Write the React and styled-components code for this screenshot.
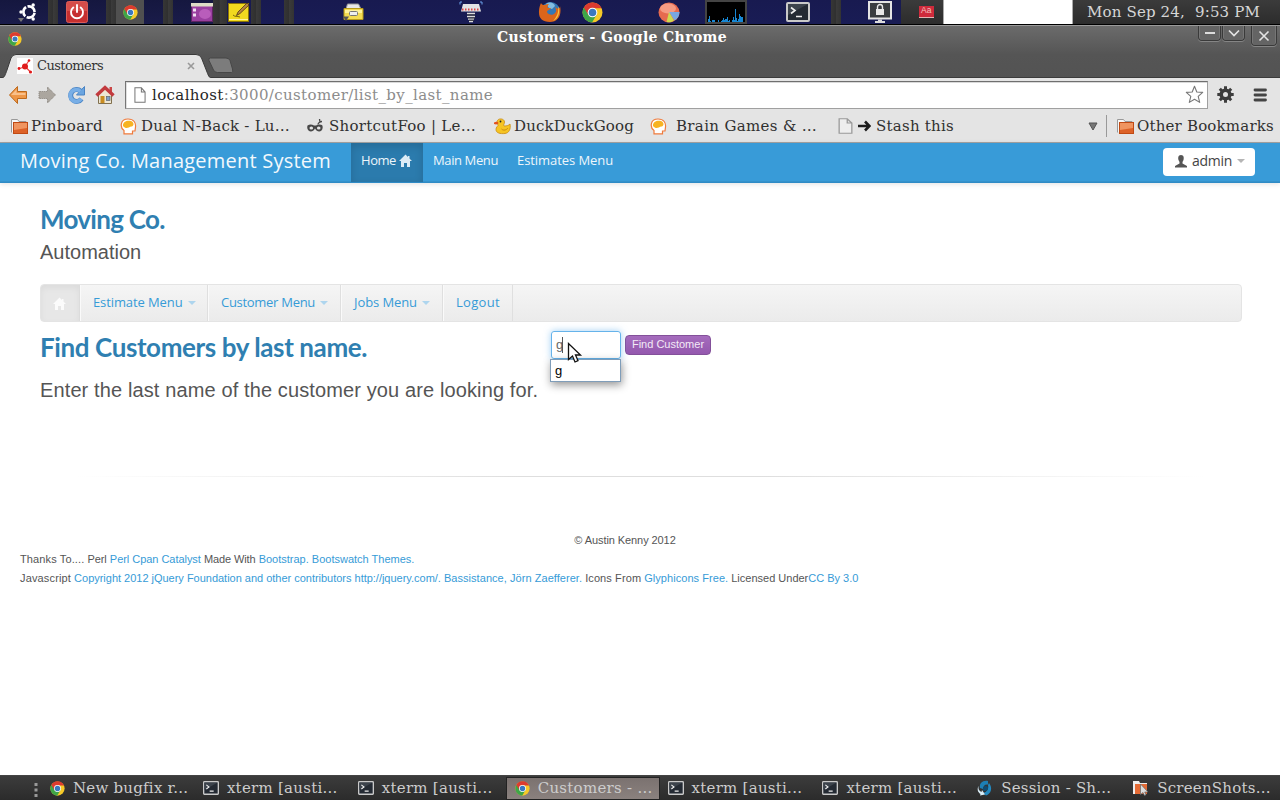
import React from "react";
import styled, { createGlobalStyle, css } from "styled-components";

const slab = '"DejaVu Serif", serif';
const humanist = '"Open Sans", "Noto Sans", sans-serif';
const sans = '"Liberation Sans", Arial, sans-serif';

const Global = createGlobalStyle`
  * { box-sizing: border-box; }
  body { margin: 0; background: #fff; overflow: hidden; }
  svg { display: block; flex: none; }
  a { color: #369bd7; text-decoration: none; }
`;

const Screen = styled.div`
  width: 1280px;
  height: 800px;
  display: flex;
  flex-direction: column;
  overflow: hidden;
  background: #fff;
`;

const Label = styled.span`
  white-space: pre;
  letter-spacing: ${(p) => p.$ls || 0}px;
`;

/* ---------- desktop panel ---------- */

const Panel = styled.header`
  height: 25px;
  display: flex;
  border-bottom: 1px solid #000;
  background: linear-gradient(#3b3b3b, #2c2c2c);
`;

const tones = {
  blue: css`background: linear-gradient(#181a50, #191c55);`,
  night: css`background: linear-gradient(#15173f, #1a1c4a);`,
  grey: css`background: linear-gradient(90deg, #363636, #303030 45%, #3b3b3b 50%, #333);`,
  lit: css`background: #505050;`,
  white: css`background: #fff; border: 1px solid #aaa; border-width: 0 1px;`,
};

const Segment = styled.div`
  display: flex;
  align-items: center;
  width: ${(p) => p.$w}px;
  ${(p) => tones[p.$tone]}
`;

const Slot = styled.div`
  margin-left: ${(p) => p.$ml}px;
`;

const Clock = styled.div`
  flex: 1;
  display: flex;
  gap: 10px;
  align-items: center;
  padding: 0 0 1px 14px;
  color: #d6d6d6;
  font: 15px/22px ${slab};
`;

/* ---------- browser window ---------- */

const WindowHead = styled.div`
  height: 53px;
  border-top: 1px solid #9a9a9a;
  background: linear-gradient(#6b6b6b, #555 55%, #535353);
  display: flex;
  flex-direction: column;
`;

const TitleRow = styled.div`
  height: 27px;
  display: flex;
  align-items: flex-start;
  padding-left: 8px;
`;

const WindowTitle = styled.div`
  flex: 1;
  padding-left: 475px;
  color: #fff;
  font: bold 14px/23px ${slab};
`;

const WindowButton = styled.div`
  width: ${(p) => p.$w || 23}px;
  height: ${(p) => p.$h || 15}px;
  margin-right: ${(p) => p.$mr}px;
  display: flex;
  align-items: center;
  justify-content: center;
  border: 1px solid #3a3a3a;
  border-top: 0;
  border-radius: 0 0 4px 4px;
  box-shadow: 0 1px 0 #858585, inset 1px 0 0 #767676, inset -1px 0 0 #767676;
  background: #646464;
`;

const TabStrip = styled.div`
  height: 25px;
  display: flex;
  border-bottom: 1px solid #3b3b3b;
`;

const Tab = styled.div`
  position: relative;
  width: 212px;
  height: 25px;
  display: flex;
  align-items: center;
  padding: 0 17px 0 17px;
  color: #333;
  font: 13px/20px ${slab};
`;

const TabShape = styled.svg`
  position: absolute;
  left: 0;
  top: 0;
`;

const TabContent = styled.div`
  position: relative;
  flex: 1;
  display: flex;
  align-items: center;
  gap: 4px;
`;

const TabClose = styled.div`
  margin-left: auto;
`;

const NewTab = styled.div`
  margin: 4px 0 0 -5px;
`;

const Chrome = styled.div`
  height: 65px;
  background: #e4e4e4;
  border-bottom: 1px solid #a3a3a3;
`;

const AddressRow = styled.div`
  height: 33px;
  display: flex;
  align-items: center;
  padding: 0 10px 0 8px;
`;

const NavIcons = styled.div`
  width: 117px;
  display: flex;
  gap: 9px;
`;

const UrlBox = styled.div`
  width: 1083px;
  height: 28px;
  display: flex;
  align-items: center;
  padding: 0 3px 0 8px;
  border: 1px solid #a0a0a0;
  border-top-color: #6f6f6f;
  border-left-color: #777;
  box-shadow: inset 0 1px 0 #d9d9d9, inset 1px 0 0 #e0e0e0;
  background: #fff;
  color: #8c8c8c;
  font: 15px/24px ${slab};
  svg + ${Label} { flex: 1; margin-left: 6px; }
  b { font-weight: normal; color: #262626; }
`;

const Tools = styled.div`
  flex: 1;
  display: flex;
  align-items: center;
  justify-content: space-between;
  padding-left: 9px;
  padding-right: 3px;
`;

const BookmarkRow = styled.div`
  height: 31px;
  display: flex;
  align-items: center;
  padding: 0 0 1px 11px;
  color: #303030;
  font: 15px/24px ${slab};
`;

const Bookmark = styled.div`
  width: ${(p) => p.$w}px;
  display: flex;
  align-items: center;
  gap: ${(p) => p.$gap || 4}px;
`;

const Divider = styled.div`
  width: 1px;
  height: 22px;
  margin: 0 10px 0 8px;
  background: #999;
`;

/* ---------- site ---------- */

const Navbar = styled.nav`
  height: 40px;
  display: flex;
  align-items: stretch;
  padding: 0 25px 0 20px;
  background: #389bd8;
  border-bottom: 1px solid #2f8bc6;
  box-shadow: inset 0 -1px 0 #3591ca, 0 1px 5px rgba(0, 0, 0, 0.12);
  color: #fff;
  font: 13px/35px ${humanist};
`;

const Brand = styled.div`
  width: 331px;
  font-size: 20px;
  line-height: 35px;
  color: #f2f8fc;
`;

const NavItem = styled.div`
  display: flex;
  align-items: flex-start;
  padding: 0 10px;
  width: ${(p) => p.$w}px;
  color: #eef6fb;
  ${(p) => p.$active && css`
    background: #2b7bad;
    box-shadow: inset 0 3px 8px rgba(0, 0, 0, 0.14);
  `}
`;

const NavIcon = styled.div`
  margin: 11px 0 0 3px;
`;

const UserButton = styled.div`
  margin: 5px 0 0 auto;
  width: 92px;
  height: 28px;
  display: flex;
  align-items: center;
  padding: 0 0 2px 12px;
  border-radius: 4px;
  background: #fff;
  color: #444;
  font: 14px/24px ${humanist};
`;

const Caret = styled.i`
  margin-left: 5px;
  border: 4px solid transparent;
  border-top-color: ${(p) => p.$color};
  border-bottom: 0;
`;

const Site = styled.main`
  flex: 1;
  display: flex;
  flex-direction: column;
`;

const Heading = styled.h1`
  margin: 0;
  height: 36px;
  color: #2f7fb1;
  font: bold 26px/34px Lato, ${humanist};
`;

const Masthead = styled.div`
  padding: 19px 40px 0;
`;

const Lead = styled.p`
  margin: 0;
  color: #555;
  font: 20px/28px ${sans};
`;

const SubNav = styled.div`
  margin: 18px 38px 0 40px;
  height: 38px;
  display: flex;
  border: 1px solid #e4e4e4;
  border-radius: 4px;
  background: linear-gradient(#f5f5f5, #ebebeb);
  overflow: hidden;
  font: 13px/34px ${humanist};
`;

const SubHome = styled.div`
  width: 39px;
  display: flex;
  justify-content: center;
  padding: 12px 2px 0 0;
  background: #e7e7e7;
  border-right: 1px solid #dcdcdc;
  box-shadow: inset 0 3px 6px rgba(0, 0, 0, 0.05);
`;

const SubItem = styled.a`
  display: flex;
  align-items: center;
  width: ${(p) => p.$w}px;
  padding: 0 0 2px 12px;
  border-left: 1px solid #fafafa;
  border-right: 1px solid #dfdfdf;
  ${Caret} { margin-top: 2px; }
`;

const Search = styled.section`
  display: flex;
  padding-left: 40px;
  height: 154px;
`;

const SearchText = styled.div`
  width: 511px;
  padding-top: 8px;
  ${Lead} { margin-top: 10px; }
`;

const SearchForm = styled.div`
  display: flex;
  align-items: flex-start;
  padding-top: 9px;
  gap: 4px;
`;

const Field = styled.div`
  position: relative;
  width: 70px;
  height: 28px;
  display: flex;
  align-items: center;
  padding: 0 4px;
  border: 1px solid #66b3ea;
  border-radius: 3px;
  box-shadow: 0 0 7px rgba(82, 168, 236, 0.55);
  color: #666;
  font: 13px/20px ${sans};
`;

const TextCaret = styled.i`
  width: 1px;
  height: 16px;
  margin-left: -1px;
  background: #555;
`;

const Suggestion = styled.div`
  position: absolute;
  left: -2px;
  top: 27px;
  width: 71px;
  height: 23px;
  padding-left: 4px;
  border: 1px solid #7f9db9;
  background: #fff;
  box-shadow: 1px 3px 8px rgba(0, 0, 0, 0.42);
  color: #000;
  font: 13px/21px ${sans};
`;

const Pointer = styled.svg`
  position: absolute;
  left: 15px;
  top: 10px;
`;

const FindButton = styled.div`
  margin-top: 4px;
  width: 86px;
  height: 20px;
  text-align: center;
  border: 1px solid #83509a;
  border-radius: 4px;
  background: linear-gradient(#a56cbd, #9458ae);
  color: #f3eaf6;
  font: 11px/17px ${sans};
`;

const Rule = styled.hr`
  margin: 0 40px;
  height: 1px;
  border: 0;
  background: linear-gradient(90deg, rgba(0, 0, 0, 0) 3%, #dedede 40%, #dedede 60%, rgba(0, 0, 0, 0) 97%);
`;

const Footer = styled.footer`
  padding: 54px 30px 0 20px;
  color: #555;
  font: 11px/19px ${sans};
`;

const Copyright = styled.div`
  padding-right: 20px;
  text-align: center;
`;

/* ---------- window list ---------- */

const Taskbar = styled.footer`
  height: 25px;
  display: flex;
  padding-left: 33px;
  border-top: 1px solid #444;
  background: linear-gradient(#3c3c3c, #2b2b2b);
  color: #cdcdcd;
  font: 15px/23px ${slab};
`;

const Grip = styled.div`
  width: 8px;
  padding: 7px 0 0 1px;
`;

const Task = styled.div`
  width: 155px;
  display: flex;
  align-items: center;
  gap: 8px;
  padding: 0 0 0 ${(p) => (p.$wide ? 9 : 7)}px;
  ${(p) => p.$active && css`
    width: 154px;
    margin: 1px 1px 0 0;
    padding-left: 8px;
    background: linear-gradient(#7b7270, #8a817e);
    border: 1px solid #222;
  `}
`;

/* ---------- drawings ---------- */

const ChromeIcon = ({ s = 16 }) => (
  <svg width={s} height={s} viewBox="0 0 20 20">
    <circle cx="10" cy="10" r="9.5" fill="#f5c928" />
    <path d="M10 10 1.8 5.2A9.5 9.5 0 0 0 9.6 19.5L14 12Z" fill="#3fa648" />
    <path d="M1.8 5.2A9.5 9.5 0 0 1 18.7 6H10L6 12.4Z" fill="#dc3b2f" />
    <circle cx="10" cy="10" r="4.6" fill="#fff" />
    <circle cx="10" cy="10" r="3.6" fill="#3a78c0" />
  </svg>
);

const TerminalIcon = ({ w = 16, h = 14 }) => (
  <svg width={w} height={h} viewBox="0 0 24 20" preserveAspectRatio="none">
    <rect x="1" y="1" width="22" height="18" rx="1" fill="#242a33" stroke="#c9c9c9" strokeWidth="2" />
    <path d="M2 2h20L2 13Z" fill="#3c434c" />
    <path d="M5 5.5 9 8.5 5 11.5M10 14.5h6" fill="none" stroke="#eee" strokeWidth="1.6" />
  </svg>
);

const HouseIcon = ({ color }) => (
  <svg width="13" height="13" viewBox="0 0 13 13">
    <path d="M6.5 0.5 0 7h2v6h3V9h3v4h3V7h2L10.5 4.5V2H9v1Z" fill={color} />
  </svg>
);

const FolderIcon = () => (
  <svg width="17" height="15" viewBox="0 0 17 15">
    <path d="M.5 13.5v-13h6l1.5 2h7v2" fill="#f7f7f7" stroke="#999" />
    <rect x="2.5" y="3.5" width="14" height="11" fill="#dd6228" stroke="#c04a14" />
    <path d="M3 4h13v5L3 11Z" fill="#f09560" />
  </svg>
);

const HeadIcon = () => (
  <svg width="17" height="17" viewBox="0 0 17 17">
    <path d="M4 15.8V12.5C-.2 9.500 0 1 8 1c6 0 8 4 7.500 8L15 13h-2.500v2.800Z" fill="#fff" stroke="#ef7b3c" strokeWidth="1.200" />
    <path d="M3 8C2.500 3 8 2 11 3s3.500 5 .5 5.500S6.500 12 3 8Z" fill="#f7b322" />
  </svg>
);

const PageIcon = ({ w = 13, h = 16, fill = "#fff", line = "#777" }) => (
  <svg width={w} height={h} viewBox="0 0 13 16" preserveAspectRatio="none">
    <path d="M1 .8h7L12 5v10.2H1ZM8 .8V5h4" fill={fill} stroke={line} strokeWidth="1.1" />
  </svg>
);

const UbuntuIcon = () => (
  <svg width="20" height="20" viewBox="0 0 20 20">
    <circle cx="11" cy="10" r="5.6" fill="none" stroke="#fff" strokeWidth="2.6" strokeDasharray="10.2 1.5" strokeDashoffset="-.8" />
    <circle cx="3" cy="10" r="1.7" fill="#fff" />
    <circle cx="15.2" cy="3" r="1.7" fill="#fff" />
    <circle cx="15.2" cy="17" r="1.7" fill="#fff" />
    <path d="M0 16h6l-3 4Z" fill="#777" />
  </svg>
);

const PowerIcon = () => (
  <svg width="22" height="22" viewBox="0 0 22 22">
    <rect x=".5" y=".5" width="21" height="21" rx="2" fill="#c62f30" stroke="#d95c58" />
    <path d="M1 1h20v9H1Z" fill="#e0625c" opacity=".6" />
    <path d="M7.3 6.5a6 6 0 1 0 7.4 0M11 4v7" fill="none" stroke="#fff" strokeWidth="1.900" strokeLinecap="round" />
  </svg>
);

const DesktopIcon = () => (
  <svg width="22" height="19" viewBox="0 0 22 19">
    <rect x=".5" y=".5" width="21" height="18" fill="#9a3fa0" stroke="#5d2461" />
    <ellipse cx="14" cy="11" rx="6" ry="5" fill="#c66bc6" opacity=".7" />
    <path d="M0 0h22v3.5H0Z" fill="#dedcc6" />
    <path d="M2 5.500h3v3H2Zm0 5h3v3H2Z" fill="#f1dff1" />
  </svg>
);

const NoteIcon = () => (
  <svg width="22" height="21" viewBox="0 0 22 21">
    <rect x=".5" y="1.5" width="20" height="18" fill="#f1d91f" stroke="#8a7408" />
    <path d="M1 17.500h19" stroke="#fff3a0" />
    <path d="M5 13c2 2 4 1 7 2" stroke="#77650a" fill="none" />
    <path d="m8.500 13.500 1.500-3.500L19 1l2 2-9 8.500Z" fill="#b8853f" stroke="#4d3516" strokeWidth=".8" />
  </svg>
);

const DrawerIcon = () => (
  <svg width="22" height="20" viewBox="0 0 22 20">
    <path d="M3 7 4.500 2h11L18 7Z" fill="#e8e8e8" stroke="#999" />
    <path d="M1 6.500h19v11H1Z" fill="#f4dc53" stroke="#b89b19" />
    <rect x="2" y="8" width="17" height="3" fill="#fff39b" />
    <rect x="6.500" y="9.500" width="8" height="4" rx="1" fill="#eee" stroke="#777" />
    <path d="M0 14.500h6l-3 4.500Z" fill="#555" />
  </svg>
);

const SpringIcon = () => (
  <svg width="24" height="22" viewBox="0 0 24 22">
    <path d="M4 3h16l2 7.500H2Z" fill="#e3e3e3" />
    <path d="M3 8.500h18" stroke="#d44" strokeWidth="1.800" strokeDasharray="1.500 1.500" />
    <path d="M1 3.500V1h2M23 3.500V1h-2" stroke="#6da4ef" fill="none" />
    <path d="M8 12.500h8M8 15.500h8M9 18h6M10 20.500h4" stroke="#ddd" strokeWidth="1.500" />
    <path d="M8 14h8M9 17h7M10 19.300h5" stroke="#444" />
  </svg>
);

const FirefoxIcon = () => (
  <svg width="23" height="22" viewBox="0 0 23 22">
    <circle cx="12.5" cy="10.5" r="9.5" fill="#3478b7" />
    <path d="M8 3c4-3 8-1 9 2l-3 3-3-1Z" fill="#82bde2" />
    <path d="M3 2c1 2 2 2 4 2 1-1 3-1 4-1-1 1-2 3-1 4h3c-1 2-4 2-4 4 1 3 6 4 8 1 2-2 1-4 0-6 4 3 5 1 5-1 2 9-2 16-10 16S.5 17 1 10c0-3 1-6 2-8Z" fill="#dc651b" />
    <path d="M20 5c3 6 0 13-5 15 4-4 6-9 5-15Z" fill="#fac33a" />
  </svg>
);

const PieIcon = () => (
  <svg width="22" height="21" viewBox="0 0 22 21">
    <ellipse cx="11" cy="10.5" rx="10.5" ry="10" fill="#e66a4f" />
    <ellipse cx="10" cy="6.500" rx="8" ry="5" fill="#f59b83" />
    <path d="M11 10h10.500c0 4-2 7-5 8.500Z" fill="#78a7e2" />
    <path d="m11 10 5 8.500c-3 2-5 2-7.500 1.500Z" fill="#cfda4d" />
  </svg>
);

const bars = [3, 6, 1, 0, 2, 2, 2, 0, 0, 0, 2, 0, 0, 1, 2, 4, 2, 3, 3, 5, 1, 2, 0, 0, 2, 5, 2, 13, 4, 1, 3, 8, 6, 5, 5];
const LoadGraph = () => (
  <svg width="42" height="24" viewBox="0 0 42 24" shapeRendering="crispEdges">
    <rect x="1" y="1" width="40" height="22" fill="#000" stroke="#444" strokeWidth="2" />
    {bars.map((h, i) => (
      <rect key={i} x={3 + i} y={22 - h} width="1" height={h} fill="#1787d4" />
    ))}
  </svg>
);

const LockScreenIcon = () => (
  <svg width="24" height="22" viewBox="0 0 24 22">
    <rect x="1" y="1" width="22" height="16.500" fill="#3a3d40" stroke="#e4e4e4" strokeWidth="2" />
    <path d="M10 18.500h4v1.500h3v2H7v-2h3Z" fill="#dcdcdc" />
    <rect x="8" y="8" width="8" height="6" fill="#e8e8e8" />
    <path d="M9.500 8V6a2.500 2.500 0 0 1 5 0v2" fill="none" stroke="#e8e8e8" strokeWidth="1.400" />
  </svg>
);

const DictionaryIcon = () => (
  <svg width="15" height="12" viewBox="0 0 15 12">
    <path d="M0 0h15v11H0Z" fill="#cf2b3c" />
    <path d="M0 11.5h15" stroke="#e5b6b6" />
    <text x="2" y="7" fontSize="8.500" fill="#f5c3c0" fontFamily="Liberation Sans">Aa</text>
  </svg>
);

const ArrowIcon = ({ flip }) => (
  <svg width="20" height="20" viewBox="0 0 20 20">
    {flip ? (
      <path d="M18.500 10 10.500 2v4.500H2v7h8.500V18Z" fill="#aba69f" stroke="#817c75" strokeDasharray="1 1" />
    ) : (
      <>
        <path d="M1.500 10 9.500 1.500V6.500H18.500v7H9.500v5Z" fill="#ee9748" stroke="#bd691c" />
        <path d="M3 10 8.500 4.500V8H17.500v2Z" fill="#f9c08a" />
      </>
    )}
  </svg>
);

const ReloadIcon = () => (
  <svg width="20" height="20" viewBox="0 0 20 20">
    <path d="M15.500 14a6 6 0 1 1-.8-8" fill="none" stroke="#4a84c4" strokeWidth="5" />
    <path d="M18.500 1.500v8.500H10.500Z" fill="#6ba5e0" stroke="#4a84c4" />
    <path d="M15.300 13.800a6 6 0 1 1-.8-7.500" fill="none" stroke="#78aee6" strokeWidth="3.800" />
  </svg>
);

const HomeIcon = () => (
  <svg width="20" height="20" viewBox="0 0 20 20">
    <path d="M3.500 9 10 4l6.500 5v9.500h-13Z" fill="#ede6d4" stroke="#81704e" />
    <rect x="5.500" y="11" width="4" height="7" fill="#c98c21" />
    <rect x="11.500" y="11.500" width="3.500" height="4" fill="#7e9fc9" stroke="#60656b" strokeWidth=".7" />
    <path d="M14.500 2h2.500v6h-2.500Z" fill="#ca4747" />
    <path d="m1.500 10.500 8.500-8 8.500 8" fill="none" stroke="#c23a3e" strokeWidth="3.400" />
  </svg>
);

const StarIcon = () => (
  <svg width="19" height="19" viewBox="0 0 19 19">
    <path d="m9.500 1.200 2.300 5.800 5.900.4-4.500 4 1.500 6-5.200-3.200-5.200 3.200 1.500-6-4.500-4L7.200 7Z" fill="#fff" stroke="#777" strokeWidth="1.100" strokeLinejoin="round" />
  </svg>
);

const GearIcon = () => (
  <svg width="17" height="17" viewBox="0 0 17 17">
    <g stroke="#3d3d3d" strokeWidth="3">
      <path d="M8.500 .3v16.400M.3 8.500h16.400" />
      <path d="m2.800 2.800 11.400 11.400M14.200 2.800 2.800 14.200" />
    </g>
    <circle cx="8.500" cy="8.500" r="4.300" fill="#e4e4e4" stroke="#3d3d3d" strokeWidth="3.600" />
  </svg>
);

const MenuIcon = () => (
  <svg width="14" height="14" viewBox="0 0 14 14">
    <path d="M2 2h10.500M2 7h10.500M2 12h10.500" stroke="#444" strokeWidth="2.800" strokeLinecap="round" />
  </svg>
);

const DuckIcon = () => (
  <svg width="17" height="17" viewBox="0 0 17 17">
    <path d="M3 3.500c1-4 7.500-3 7.500.5 0 2-1.500 3-.5 4 3 0 4.500-.5 6-2 1 5-1 9-5 9.500-5 .5-9-.5-9-4 0-2.500 1.500-3 2-4Z" fill="#f6c423" stroke="#c98b10" strokeWidth=".8" />
    <path d="M0 4.500c2-1 4-1 4.500.5C4 6.500 2 6.800 0 6Z" fill="#e3531e" />
    <circle cx="6.500" cy="3.500" r=".9" fill="#222" />
    <path d="M7.500 11c2 2 5 1 6.500-1" stroke="#c98b10" fill="none" />
  </svg>
);

const MaskIcon = () => (
  <svg width="16" height="14" viewBox="0 0 16 14">
    <path d="M.5 6.500C3 5 5 5.500 7 6.500h2c2-1 4-1.500 6-.5 1 1 1 4-.5 5.500-2 2-5 1-6.500-2-1.500 3-4.500 4-6.500 2C0 10 0 8 .5 6.500Z" fill="#484848" />
    <path d="M11 5.500C11 4 13 2.500 15 2.500M13 3.500 12.500 0" stroke="#484848" strokeWidth="1.300" fill="none" />
    <ellipse cx="4.300" cy="9" rx="1.800" ry="1.500" fill="#e4e4e4" />
    <ellipse cx="11.700" cy="9" rx="1.800" ry="1.500" fill="#e4e4e4" />
  </svg>
);

const CatalystIcon = () => (
  <svg width="16" height="16" viewBox="0 0 16 16">
    <rect width="16" height="16" fill="#fff" />
    <path d="m8 8.500 4-6M8 8.500 1.500 11M8 8.500 13.500 14" stroke="#e44" strokeWidth="1.200" />
    <circle cx="8" cy="8.500" r="3" fill="#e01b1b" />
    <circle cx="12" cy="2.500" r="1.300" fill="#e01b1b" />
    <circle cx="2" cy="10.500" r="1.400" fill="#e01b1b" />
    <circle cx="13.500" cy="14" r="1.600" fill="#e01b1b" />
  </svg>
);

const SwirlIcon = () => (
  <svg width="16" height="16" viewBox="0 0 16 16">
    <path d="M11 1C6 0 2 3 3 8l3 1C6 6 8 4 11 4.500Z" fill="#1d7fb5" />
    <path d="M12 3c4 5 2 11-3 12.500L6 13c4-1 6-4 5-8Z" fill="#2389c0" />
    <path d="M1.500 6c-.5 3 .5 5 3 6l.5-2 3 4.500-5 1 .5-1.500C.5 12 0 9 1.500 6Z" fill="#d9ecf5" />
    <path d="M6 8c1-3 5-2.500 5 0s-3 4-5 2.500Z" fill="#0d4b73" />
  </svg>
);

const FilesIcon = () => (
  <svg width="17" height="16" viewBox="0 0 17 16">
    <path d="M1 14V1h6l1 2h7v11Z" fill="#eee" />
    <path d="M3 4h12v10H3Z" fill="#e56b35" />
    <path d="M8.500 4v10.500l2.500-2 1.500 3 1.500-.7-1.300-2.800H16Z" fill="#ddd" stroke="#666" strokeWidth=".7" />
  </svg>
);

const UserIcon = () => (
  <svg width="12" height="13" viewBox="0 0 12 13">
    <path d="M6 0C3 0 3 3 3.500 5L4.500 7v1.500L0 11v1.500h12V11L7.500 8.500V7l1-2C9 3 9 0 6 0Z" fill="#555" />
  </svg>
);

const tasks = [
  { icon: <ChromeIcon s={15} />, text: "New bugfix r...", ls: 0.23, wide: true },
  { icon: <TerminalIcon />, text: "xterm [austi...", ls: 0.26 },
  { icon: <TerminalIcon />, text: "xterm [austi...", ls: 0.26 },
  { icon: <ChromeIcon s={15} />, text: "Customers - ...", ls: 0.28, wide: true, active: true },
  { icon: <TerminalIcon />, text: "xterm [austi...", ls: 0.26 },
  { icon: <TerminalIcon />, text: "xterm [austi...", ls: 0.26 },
  { icon: <SwirlIcon />, text: "Session - Sh...", ls: 0.2 },
  { icon: <FilesIcon />, text: "ScreenShots...", ls: 0.24 },
];

const bookmarks = [
  { w: 109, icon: <FolderIcon />, text: "Pinboard", ls: 0.39, gap: 3 },
  { w: 187, icon: <HeadIcon />, text: "Dual N-Back - Lu…", ls: 0.23, gap: 4 },
  { w: 187, icon: <MaskIcon />, text: "ShortcutFoo | Le…", ls: 0.27, gap: 6 },
  { w: 156, icon: <DuckIcon />, text: "DuckDuckGoog", ls: 0.17, gap: 3 },
  { w: 188, icon: <HeadIcon />, text: "Brain Games & …", ls: 0.34, gap: 9 },
];

const menus = [
  { w: 128, text: "Estimate Menu", ls: -0.1 },
  { w: 133, text: "Customer Menu", ls: -0.29 },
  { w: 102, text: "Jobs Menu", ls: -0.09 },
];

export default function App() {
  return (
    <Screen>
      <Global />
      <Panel>
        <Segment $w={48} $tone="night"><Slot $ml={18}><UbuntuIcon /></Slot></Segment>
        <Segment $w={10} $tone="grey" />
        <Segment $w={48} $tone="night"><Slot $ml={8}><PowerIcon /></Slot></Segment>
        <Segment $w={10} $tone="grey" />
        <Segment $w={28} $tone="lit"><Slot $ml={7}><ChromeIcon s={15} /></Slot></Segment>
        <Segment $w={19} $tone="night" />
        <Segment $w={10} $tone="grey" />
        <Segment $w={15} $tone="night" />
        <Segment $w={25} $tone="night"><Slot $ml={3}><DesktopIcon /></Slot></Segment>
        <Segment $w={14} $tone="grey" />
        <Segment $w={24} $tone="blue"><Slot $ml={1}><NoteIcon /></Slot></Segment>
        <Segment $w={10} $tone="grey" />
        <Segment $w={23} $tone="blue" />
        <Segment $w={10} $tone="grey" />
        <Segment $w={537} $tone="blue">
          <Slot $ml={49}><DrawerIcon /></Slot>
          <Slot $ml={94}><SpringIcon /></Slot>
          <Slot $ml={55}><FirefoxIcon /></Slot>
          <Slot $ml={21}><ChromeIcon s={21} /></Slot>
          <Slot $ml={55}><PieIcon /></Slot>
          <Slot $ml={25}><LoadGraph /></Slot>
          <Slot $ml={39}><TerminalIcon w={24} h={20} /></Slot>
        </Segment>
        <Segment $w={10} $tone="grey" />
        <Segment $w={60} $tone="blue"><Slot $ml={27}><LockScreenIcon /></Slot></Segment>
        <Segment $w={42} $tone="panel"><Slot $ml={18}><DictionaryIcon /></Slot></Segment>
        <Segment $w={130} $tone="white" />
        <Clock>
          <Label $ls={0.16}>Mon Sep 24,</Label>
          <Label $ls={0.16}>9:53 PM</Label>
        </Clock>
      </Panel>

      <WindowHead>
        <TitleRow>
          <Slot $ml={0}>
            <svg width="14" height="20"><g transform="translate(0 6)"><ChromeIcon s={14} /></g></svg>
          </Slot>
          <WindowTitle><Label $ls={0.37}>Customers - Google Chrome</Label></WindowTitle>
          <WindowButton $mr={1}>
            <svg width="11" height="12"><path d="M1 6h10" stroke="#dcdcdc" strokeWidth="2" /></svg>
          </WindowButton>
          <WindowButton $mr={6}>
            <svg width="12" height="12"><path d="m1 3.500 5 5 5-5" stroke="#e4e4e4" strokeWidth="1.700" fill="none" /></svg>
          </WindowButton>
          <WindowButton $w={26} $h={20} $mr={3}>
            <svg width="12" height="12"><path d="m1.500 1.500 9 9m0-9-9 9" stroke="#e4e4e4" strokeWidth="1.600" /></svg>
          </WindowButton>
        </TitleRow>
        <TabStrip>
          <Tab>
            <TabShape width="214" height="26" viewBox="0 0 214 26">
              <path d="M0 25.500C5 25 5 22 7 17L11 5Q12.500 1.500 16 1.500H196Q200 1.500 201.500 5L207 19C209 24 209 25 214 25.500Z" fill="#e4e4e4" stroke="#3a3a3a" />
              <path d="M0 25.500H214" stroke="#e4e4e4" strokeWidth="1.200" />
            </TabShape>
            <TabContent>
              <CatalystIcon />
              <Label $ls={-0.55}>Customers</Label>
              <TabClose>
                <svg width="8" height="8"><path d="m1 1 6 6m0-6-6 6" stroke="#999" strokeWidth="1.600" /></svg>
              </TabClose>
            </TabContent>
          </Tab>
          <NewTab>
            <svg width="28" height="17">
              <path d="M3.500 1H19Q22 1 23 3.500L25.500 12q1 3.500-1 3.500H10.500Q7.500 15.500 6.500 13L2 3.500Q1 1 3.500 1Z" fill="#7c7c7c" stroke="#474747" />
            </svg>
          </NewTab>
        </TabStrip>
      </WindowHead>

      <Chrome>
        <AddressRow>
          <NavIcons>
            <ArrowIcon />
            <ArrowIcon flip />
            <ReloadIcon />
            <HomeIcon />
          </NavIcons>
          <UrlBox>
            <PageIcon w={12} />
            <Label $ls={0.37}><b>localhost</b>:3000/customer/list_by_last_name</Label>
            <StarIcon />
          </UrlBox>
          <Tools>
            <GearIcon />
            <MenuIcon />
          </Tools>
        </AddressRow>
        <BookmarkRow>
          {bookmarks.map((b) => (
            <Bookmark key={b.text} $w={b.w} $gap={b.gap}>
              {b.icon}
              <Label $ls={b.ls}>{b.text}</Label>
            </Bookmark>
          ))}
          <Bookmark $w={250} $gap={5}>
            <PageIcon w={15} fill="#eee" line="#999" />
            <svg width="13" height="12"><path d="M0 6h10M7 1.500 11.500 6 7 10.500" fill="none" stroke="#1c1c1c" strokeWidth="2.600" /></svg>
            <Label $ls={0.24}>Stash this</Label>
          </Bookmark>
          <svg width="10" height="9"><path d="M1 1h8L5 8Z" fill="#777" stroke="#555" /></svg>
          <Divider />
          <Bookmark $w={163} $gap={3}>
            <FolderIcon />
            <Label $ls={0.19}>Other Bookmarks</Label>
          </Bookmark>
        </BookmarkRow>
      </Chrome>

      <Navbar>
        <Brand><Label $ls={0.22}>Moving Co. Management System</Label></Brand>
        <NavItem $w={72} $active>
          <Label $ls={-0.44}>Home</Label>
          <NavIcon><HouseIcon color="#dcebf5" /></NavIcon>
        </NavItem>
        <NavItem $w={84}><Label $ls={-0.39}>Main Menu</Label></NavItem>
        <NavItem $w={116}><Label $ls={-0.07}>Estimates Menu</Label></NavItem>
        <UserButton>
          <UserIcon />
          <Slot $ml={5}><Label $ls={-0.29}>admin</Label></Slot>
          <Caret $color="#b5b5b5" />
        </UserButton>
      </Navbar>

      <Site>
        <Masthead>
          <Heading><Label $ls={-0.7}>Moving Co.</Label></Heading>
          <Lead>Automation</Lead>
        </Masthead>
        <SubNav>
          <SubHome><HouseIcon color="#fbfbfb" /></SubHome>
          {menus.map((m) => (
            <SubItem key={m.text} $w={m.w} href="#">
              <Label $ls={m.ls}>{m.text}</Label>
              <Caret $color="#aed5ee" />
            </SubItem>
          ))}
          <SubItem $w={70} href="#"><Label $ls={0.32}>Logout</Label></SubItem>
        </SubNav>

        <Search>
          <SearchText>
            <Heading><Label $ls={-0.4}>Find Customers by last name.</Label></Heading>
            <Lead><Label $ls={0.12}>Enter the last name of the customer you are looking for.</Label></Lead>
          </SearchText>
          <SearchForm>
            <Field>
              g<TextCaret />
              <Suggestion>g</Suggestion>
              <Pointer width="16" height="22" viewBox="0 0 16 22">
                <path d="M1.500 1.500v16l4-3.500 2.500 6 3-1.300L8.500 13h5Z" fill="#fff" stroke="#111" strokeWidth="1.300" />
              </Pointer>
            </Field>
            <FindButton>Find Customer</FindButton>
          </SearchForm>
        </Search>

        <Rule />

        <Footer>
          <Copyright><Label $ls={-0.08}>© Austin Kenny 2012</Label></Copyright>
          <div>
            <Label $ls={0.12}>Thanks To....</Label> <Label $ls={-0.05}>Perl</Label>{" "}
            <a href="#"><Label $ls={-0.04}>Perl Cpan Catalyst</Label></a>{" "}
            <Label $ls={-0.1}>Made With</Label> <a href="#">Bootstrap.</a> <a href="#">Bootswatch Themes.</a>
          </div>
          <div>
            <Label $ls={0.15}>Javascript</Label>{" "}
            <a href="#"><Label $ls={-0.015}>Copyright 2012 jQuery Foundation and other contributors http://jquery.com/.</Label></a>{" "}
            <a href="#"><Label $ls={0.05}>Bassistance, Jörn Zaefferer.</Label></a>{" "}
            <Label $ls={0.1}>Icons From</Label> <a href="#"><Label $ls={0.05}>Glyphicons Free.</Label></a> Licensed Under
            <a href="#">CC By 3.0</a>
          </div>
        </Footer>
      </Site>

      <Taskbar>
        <Grip>
          <svg width="4" height="14"><path d="M2 0v14" stroke="#999" strokeWidth="3" strokeDasharray="3 2.500" /></svg>
        </Grip>
        {tasks.map((t, i) => (
          <Task key={i} $wide={t.wide} $active={t.active}>
            {t.icon}
            <Label $ls={t.ls}>{t.text}</Label>
          </Task>
        ))}
      </Taskbar>
    </Screen>
  );
}
